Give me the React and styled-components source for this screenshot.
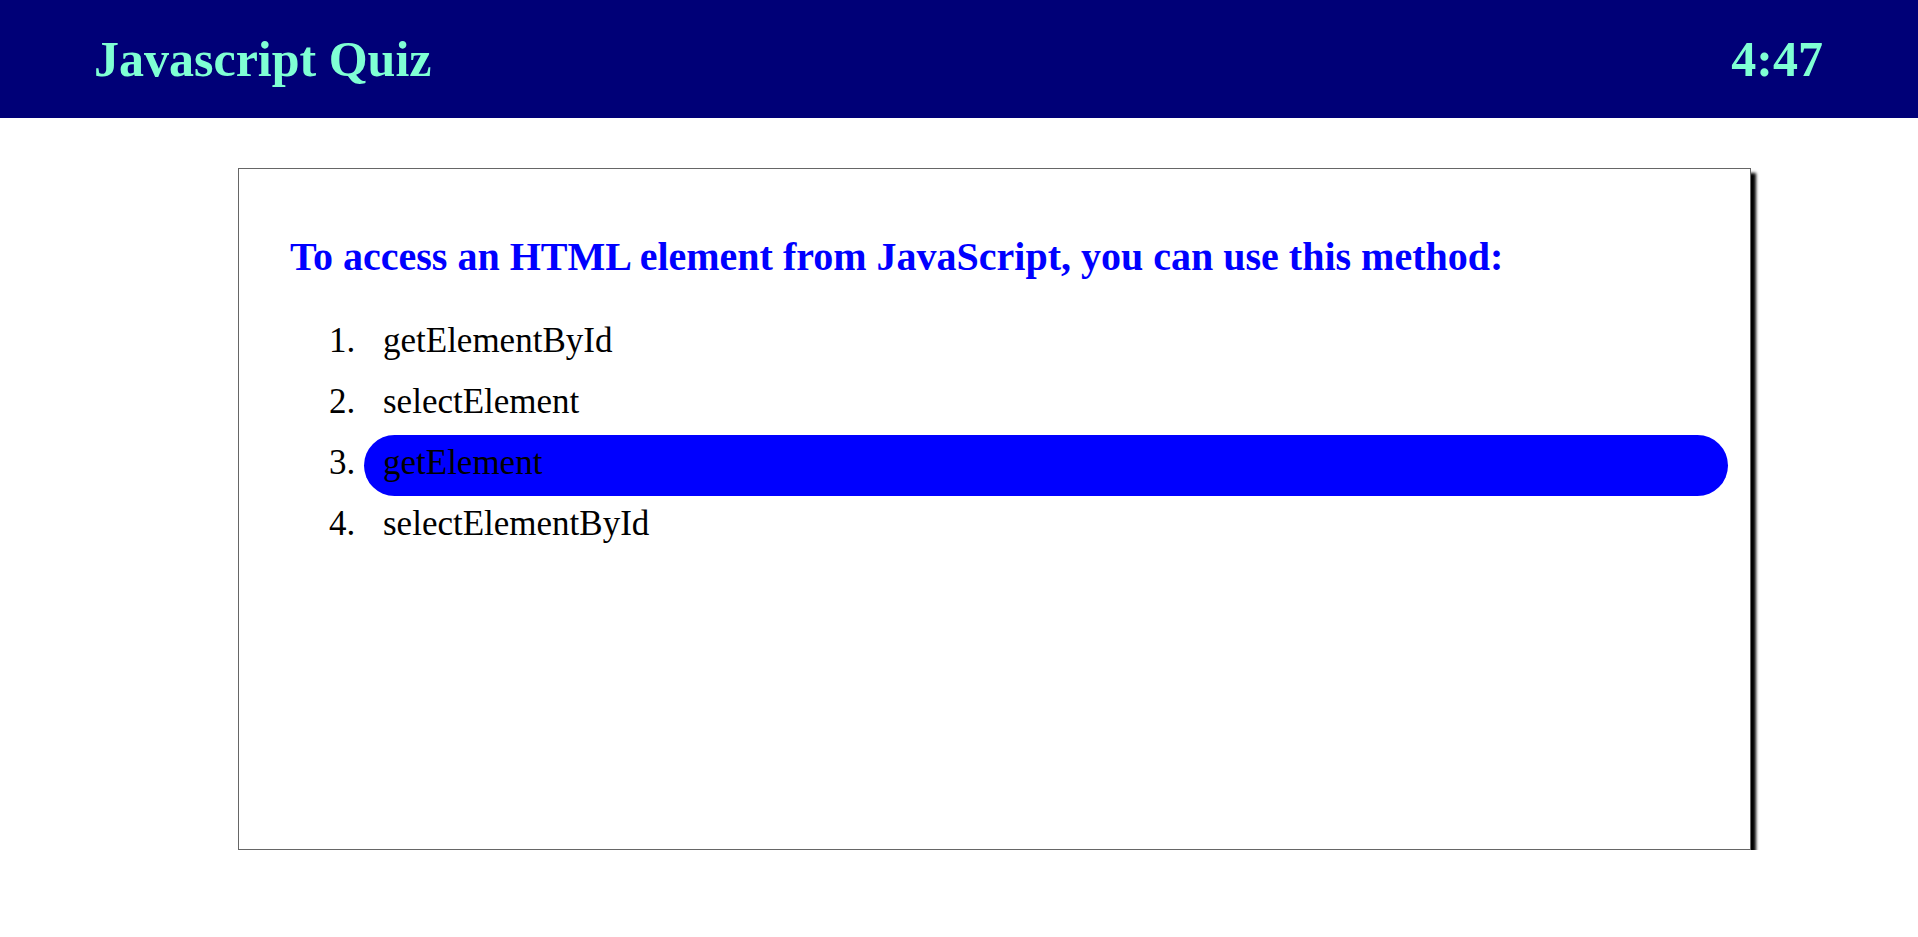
import styled, { createGlobalStyle } from 'styled-components';

const GlobalStyle = createGlobalStyle`
  body {
    margin: 0;
    font-family: "Liberation Serif", "Times New Roman", serif;
    background: #fff;
  }
`;

const Header = styled.header`
  display: flex;
  justify-content: space-between;
  align-items: center;
  height: 118px;
  padding: 0 95px 0 94px;
  box-sizing: border-box;
  background: #000077;
  color: #7fffd4;
`;

const Title = styled.h1`
  margin: 0;
  font-size: 50px;
  font-weight: bold;
`;

const Timer = styled.div`
  font-size: 50px;
  font-weight: bold;
`;

const Card = styled.section`
  box-sizing: border-box;
  width: 1513px;
  height: 682px;
  margin: 50px 0 0 238px;
  padding: 64px 22px 0 51px;
  border: 1px solid #666;
  box-shadow: 5px 5px 3px #000;
  background: #fff;
`;

const Question = styled.h2`
  margin: 0 0 33px;
  font-size: 40px;
  color: #0000ff;
`;

const Options = styled.ol`
  margin: 0;
  padding-left: 74px;
  font-size: 35px;
`;

const Option = styled.li`
  box-sizing: border-box;
  height: 61px;
  padding: 8px 0 0 19px;
  border-radius: 31px;
  background: ${(p) => (p.$selected ? '#0000ff' : 'transparent')};
`;

const options = ['getElementById', 'selectElement', 'getElement', 'selectElementById'];

export default function App() {
  return (
    <>
      <GlobalStyle />
      <Header>
        <Title>Javascript Quiz</Title>
        <Timer>4:47</Timer>
      </Header>
      <Card>
        <Question>To access an HTML element from JavaScript, you can use this method:</Question>
        <Options>
          {options.map((o, i) => (
            <Option key={o} $selected={i === 2}>
              {o}
            </Option>
          ))}
        </Options>
      </Card>
    </>
  );
}
